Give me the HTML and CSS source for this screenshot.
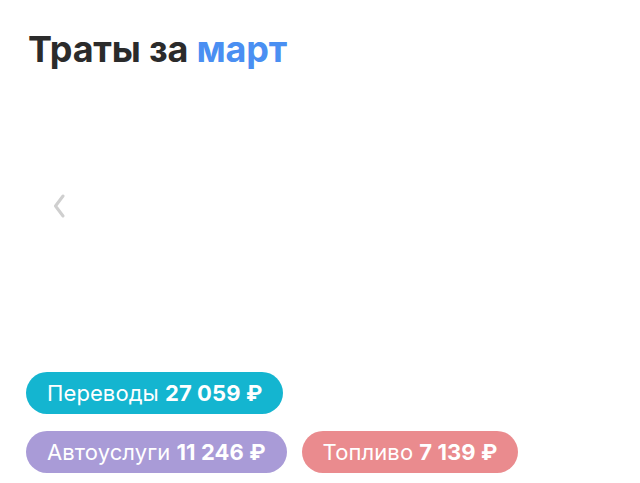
FILE: index.html
```html
<!DOCTYPE html>
<html lang="ru">

<head>
    <meta charset="utf-8">
    <meta name="viewport" content="width=device-width, initial-scale=1.0">
    <title>Траты</title>
    <link rel="stylesheet" href="styles.css">
</head>

<body>
    <main class="spend">
        <h1 class="title">Траты за <span class="month">март</span></h1>

        <section class="chart">
            <button class="nav-prev" aria-label="Назад">
                <svg width="12" height="26" viewBox="0 0 12 26">
                    <path d="M10 3 L2.5 13 L10 23" fill="none" stroke="#cfcfcf" stroke-width="3" stroke-linecap="round" stroke-linejoin="round"/>
                </svg>
            </button>
        </section>

        <div class="tags">
            <div class="tag-row">
                <span class="tag transfers">Переводы <b>27&nbsp;059&nbsp;₽</b></span>
            </div>
            <div class="tag-row">
                <span class="tag auto">Автоуслуги <b>11&nbsp;246&nbsp;₽</b></span>
                <span class="tag fuel">Топливо <b>7&nbsp;139&nbsp;₽</b></span>
            </div>
        </div>
    </main>
</body>

</html>
```

FILE: styles.css
```css
body {
    margin: 0;
    background-color: #ffffff;
    font-family: Inter, Roboto, "Noto Sans", sans-serif;
}

.spend {
    padding: 31px 26px 0 26px;
}

.title {
    margin: 0 0 0 2px;
    font-size: 36px;
    font-weight: 700;
    line-height: 36px;
    letter-spacing: -0.2px;
    color: #2b2b2b;
}

.month {
    color: #4a8ff2;
}

.chart {
    height: 305px;
    padding-top: 126px;
    box-sizing: border-box;
}

.nav-prev {
    margin: 0 0 0 27px;
    padding: 0;
    border: none;
    background: none;
    display: flex;
}

.tags {
    display: flex;
    flex-direction: column;
    gap: 17px;
}

.tag-row {
    display: flex;
    gap: 15px;
}

.tag {
    height: 42px;
    padding: 0 21px;
    border-radius: 21px;
    display: flex;
    align-items: center;
    font-size: 22px;
    letter-spacing: 0.1px;
    color: #ffffff;
    white-space: nowrap;
}

.tag b {
    margin-left: 6px;
    font-weight: 700;
}

.transfers {
    background-color: #14b5d0;
}

.auto {
    background-color: #a99bd7;
}

.fuel {
    background-color: #ea8b8e;
}
```
